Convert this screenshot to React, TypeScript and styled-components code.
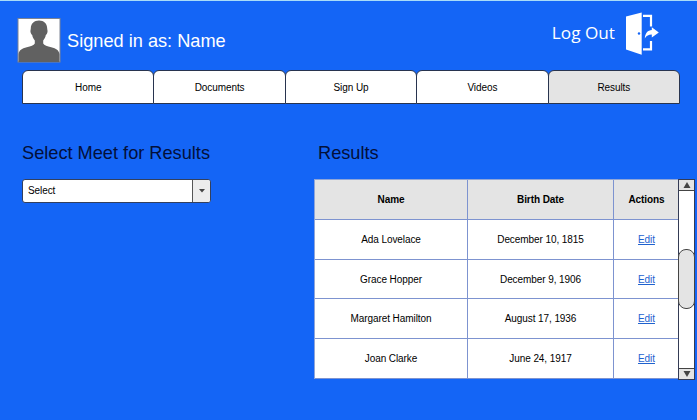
import React from "react";
import styled, { createGlobalStyle } from "styled-components";

const GlobalStyle = createGlobalStyle`
  * { box-sizing: border-box; }
  body {
    margin: 0;
    background: #1465f6;
    color: #000;
    font-family: "Liberation Sans", Arial, sans-serif;
    font-size: 10px;
    letter-spacing: -0.08px;
  }
`;

const Page = styled.div`
  width: 697px;
  height: 420px;
  overflow: hidden;
  background: #1465f6;
  border-top: 1px solid #a9dcf8;
`;

const Header = styled.header`
  display: flex;
  height: 69px;
  padding: 17px 37px 0 17px;
  letter-spacing: 0;
`;

const Avatar = styled.svg`
  display: block;
  width: 44px;
  height: 45px;
`;

const SignedIn = styled.div`
  margin: 13px auto 0 6px;
  font-size: 18.2px;
  line-height: 20px;
  color: #fff;
  white-space: nowrap;
`;

const LogOut = styled.a`
  display: flex;
  margin-top: -7px;
  color: #fff;
  font-family: "Open Sans", sans-serif;
  font-size: 17.2px;
  line-height: 24px;
  white-space: nowrap;

  span { margin-top: 10px; }
`;

const DoorIcon = styled.svg`
  display: block;
  width: 36px;
  height: 45px;
  margin-left: 9px;
`;

const Tabs = styled.nav`
  display: flex;
  width: 658px;
  height: 34px;
  margin-left: 22px;
`;

const Tab = styled.a<{ $active?: boolean }>`
  display: flex;
  flex: 1;
  align-items: center;
  justify-content: center;
  margin-right: -1px;
  border: 1px solid #28344f;
  border-radius: 6px 6px 0 0;
  background: ${(p) => (p.$active ? "#e4e4e4" : "#fff")};

  &:last-child { margin-right: 0; }
`;

const Content = styled.main`
  display: flex;
  padding: 39px 2px 0 22px;
`;

const Chooser = styled.section`
  width: 292px;
`;

const Heading = styled.h2<{ $indent?: number }>`
  margin: 0 0 15px ${(p) => p.$indent ?? 0}px;
  font-size: 18.2px;
  line-height: 21px;
  font-weight: 400;
  letter-spacing: 0;
  color: #03103a;
  white-space: nowrap;
`;

const Select = styled.div`
  display: flex;
  width: 189px;
  height: 24px;
  border: 1px solid #33405e;
  border-radius: 3px;
  overflow: hidden;
  background: #fff;
`;

const SelectValue = styled.div`
  flex: 1;
  padding-left: 5px;
  line-height: 22px;
`;

const SelectArrow = styled.div`
  display: flex;
  align-items: center;
  justify-content: center;
  width: 18px;
  border-left: 1px solid #555;
  background: #ececec;
`;

const Results = styled.section`
  flex: 1;
`;

const TablePane = styled.div`
  display: flex;
  height: 201px;
`;

const Table = styled.div`
  display: grid;
  grid-template-columns: 153px 146px 65px;
  grid-template-rows: 40px 40px 39px 40px 40px;
  width: 365px;
  height: 200px;
  border: 1px solid #8fa5d8;
  border-right: 0;
`;

const Cell = styled.div<{ $head?: boolean; $last?: boolean }>`
  display: flex;
  align-items: center;
  justify-content: center;
  border-style: solid;
  border-color: #7d93d0;
  border-width: 0 ${(p) => (p.$last ? 0 : 1)}px 1px 0;
  background: ${(p) => (p.$head ? "#e4e4e4" : "#fff")};
  font-weight: ${(p) => (p.$head ? 700 : 400)};
  white-space: nowrap;
`;

const EditLink = styled.a`
  color: #1e62cf;
  text-decoration: underline;
`;

const ScrollBar = styled.div`
  display: flex;
  flex-direction: column;
  width: 17px;
  height: 201px;
  margin-left: -1px;
  border: 1px solid #343b55;
  background: #fff;
`;

const ScrollButton = styled.div<{ $down?: boolean }>`
  display: flex;
  align-items: center;
  justify-content: center;
  height: 11px;
  border-bottom: ${(p) => (p.$down ? 0 : 1)}px solid #444;
  border-top: ${(p) => (p.$down ? 1 : 0)}px solid #444;
  background: #e4e4e4;
`;

const ScrollTrack = styled.div`
  flex: 1;
  padding-top: 58px;
`;

const ScrollThumb = styled.div`
  height: 60px;
  margin: 0 -1px;
  border: 1px solid #444;
  border-radius: 8px;
  background: #e4e4e4;
`;

const Arrow = styled.svg`
  display: block;
`;

const tabs = ["Home", "Documents", "Sign Up", "Videos", "Results"];

const people = [
  { name: "Ada Lovelace", born: "December 10, 1815" },
  { name: "Grace Hopper", born: "December 9, 1906" },
  { name: "Margaret Hamilton", born: "August 17, 1936" },
  { name: "Joan Clarke", born: "June 24, 1917" },
];

export default function App() {
  return (
    <Page>
      <GlobalStyle />
      <Header>
        <Avatar viewBox="0 0 44 45">
          <rect x="1" y=".5" width="42" height="43.500" fill="#fff" stroke="#7c8494" />
          <path
            d="M22 2.500C17 2.500 13.800 5.500 13.800 10.500c0 1.500-.8 2.500 0 4.500.3 1 .8 1.600 1.400 2 .4 2.400 1.400 4 2.600 5.500V25.500c-1 2.200-4 2.700-8 3.700-5 1.300-7.800 3-8.300 7V44h41v-7.800c-.5-4-3.300-5.700-8.300-7-4-1-7-1.500-8-3.700v-3c1.200-1.500 2.200-3.100 2.600-5.500.6-.4 1.100-1 1.400-2 .8-2 0-3 0-4.500 0-5-3.200-8-8.200-8Z"
            fill="#616161"
          />
        </Avatar>
        <SignedIn>Signed in as: Name</SignedIn>
        <LogOut>
          <span>Log Out</span>
          <DoorIcon viewBox="0 0 36 45">
            <path d="M2 5.500 17.700 1.500V43.700L2 38.500Z" fill="#fff" />
            <circle cx="15" cy="22.500" r="1.200" fill="#1465f6" />
            <path d="M19 4.800h8V15.500M19 38.300h8V30" fill="none" stroke="#fff" strokeWidth="2.200" />
            <path d="M20.800 27.500c.3-5.500 3-8.200 7-8.500V16.200l7 5.300-7 5V23.500c-3.200 0-5.200 1-7 4Z" fill="#fff" />
          </DoorIcon>
        </LogOut>
      </Header>
      <Tabs>
        {tabs.map((t) => (
          <Tab key={t} $active={t === "Results"}>{t}</Tab>
        ))}
      </Tabs>
      <Content>
        <Chooser>
          <Heading>Select Meet for Results</Heading>
          <Select>
            <SelectValue>Select</SelectValue>
            <SelectArrow>
              <Arrow width="6" height="4"><path d="M0 0h6L3 3.500Z" fill="#444" /></Arrow>
            </SelectArrow>
          </Select>
        </Chooser>
        <Results>
          <Heading $indent={4}>Results</Heading>
          <TablePane>
            <Table>
              <Cell $head>Name</Cell>
              <Cell $head>Birth Date</Cell>
              <Cell $head $last>Actions</Cell>
              {people.map((p) => (
                <React.Fragment key={p.name}>
                  <Cell>{p.name}</Cell>
                  <Cell>{p.born}</Cell>
                  <Cell $last><EditLink>Edit</EditLink></Cell>
                </React.Fragment>
              ))}
            </Table>
            <ScrollBar>
              <ScrollButton>
                <Arrow width="8" height="6"><path d="M4 0 7.500 6h-7Z" fill="#444" /></Arrow>
              </ScrollButton>
              <ScrollTrack><ScrollThumb /></ScrollTrack>
              <ScrollButton $down>
                <Arrow width="8" height="6"><path d="M4 6 7.500 0h-7Z" fill="#444" /></Arrow>
              </ScrollButton>
            </ScrollBar>
          </TablePane>
        </Results>
      </Content>
    </Page>
  );
}
